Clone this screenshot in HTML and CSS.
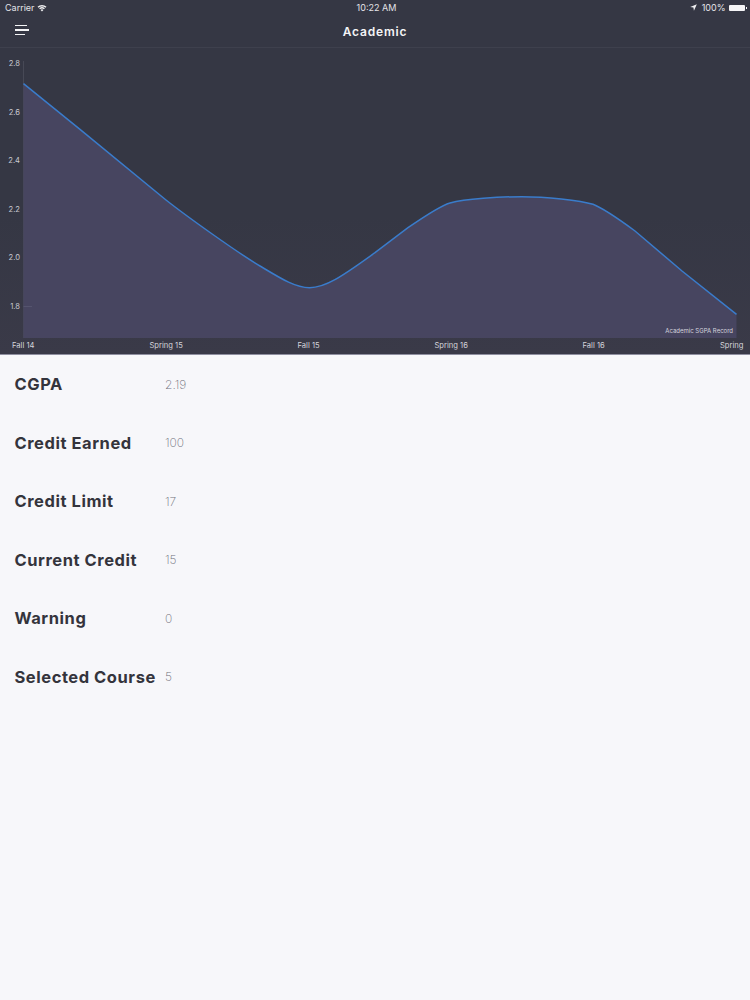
FILE: index.html
```html
<!DOCTYPE html>
<html lang="en">
<head>
<meta charset="utf-8">
<title>Academic</title>
<link rel="stylesheet" href="styles.css">
</head>
<body>
<header class="top">
  <div class="status">
    <div class="status-left">
      <span>Carrier</span>
      <svg class="wifi" viewBox="0 0 12 9"><path d="M6 8.8 4.3 6.9a2.4 2.4 0 0 1 3.4 0zM3.6 6.100 2.600 5a4.900 4.900 0 0 1 6.800 0L8.400 6.100a3.500 3.500 0 0 0-4.800 0zM1.900 4.300.6 3a7.700 7.700 0 0 1 10.800 0L10.100 4.300a5.900 5.900 0 0 0-8.200 0z"/></svg>
    </div>
    <div class="status-time">10:22 AM</div>
    <div class="status-right">
      <svg class="arrow" viewBox="0 0 8 8"><path d="M7.800.2.200 3.500l3.700.6.600 3.700z"/></svg>
      <span>100%</span>
      <span class="battery"><span class="battery-tip"></span></span>
    </div>
  </div>
  <nav class="nav">
    <button class="menu" aria-label="Menu">
      <span class="menu-line l1"></span>
      <span class="menu-line l2"></span>
      <span class="menu-line l3"></span>
    </button>
    <h1 class="title">Academic</h1>
  </nav>
</header>
<section class="chart">
  <svg class="plot" viewBox="0 0 750 307" width="750" height="307">
    <path class="axis" d="M23.500 13V290"/>
    <path class="area" d="M23.500 35.700L80 81.300L166 152C185 167 235 203 260 218C280 230 295 239.700 309.500 239.700C325 239.700 340 230 375 204.700L408 179.700C425 168 440 158 450 155C465 151 500 148.700 522 148.700C545 148.700 580 152 593 156.300C605 161 620 172 635 183L682 223L736.500 266.300V290H23.500Z"/>
    <path class="tick" d="M23.500 258.500H32"/>
    <path class="line" d="M23.500 35.700L80 81.300L166 152C185 167 235 203 260 218C280 230 295 239.700 309.500 239.700C325 239.700 340 230 375 204.700L408 179.700C425 168 440 158 450 155C465 151 500 148.700 522 148.700C545 148.700 580 152 593 156.300C605 161 620 172 635 183L682 223L736.500 266.300"/>
    <g class="ytick">
      <text x="20" y="18.300">2.8</text>
      <text x="20" y="66.800">2.6</text>
      <text x="20" y="115.300">2.4</text>
      <text x="20" y="163.800">2.2</text>
      <text x="20" y="212.300">2.0</text>
      <text x="20" y="260.800">1.8</text>
    </g>
    <g class="xtick">
      <text x="12" y="299.800">Fall 14</text>
      <text x="149.500" y="299.800">Spring 15</text>
      <text x="297.500" y="299.800">Fall 15</text>
      <text x="434.500" y="299.800">Spring 16</text>
      <text x="582.500" y="299.800">Fall 16</text>
      <text x="720" y="299.800">Spring</text>
    </g>
    <text class="caption" x="733" y="285">Academic SGPA Record</text>
  </svg>
</section>
<main class="stats">
  <div class="row"><span class="label">CGPA</span><span class="value">2.19</span></div>
  <div class="row"><span class="label">Credit Earned</span><span class="value">100</span></div>
  <div class="row"><span class="label">Credit Limit</span><span class="value">17</span></div>
  <div class="row"><span class="label">Current Credit</span><span class="value">15</span></div>
  <div class="row"><span class="label">Warning</span><span class="value">0</span></div>
  <div class="row"><span class="label">Selected Course</span><span class="value">5</span></div>
</main>
</body>
</html>
```
FILE: styles.css
```css
html, body {
  margin: 0;
  padding: 0;
  height: 100%;
  overflow: hidden;
  background: #f7f7fa;
  font-family: "Inter", "Liberation Sans", sans-serif;
}
.top {
  background: #353744;
  color: #f2f2f5;
  height: 47px;
  border-bottom: 1px solid #3e404d;
}
.status {
  height: 15px;
  padding: 0 4px 0 5px;
  display: grid;
  grid-template-columns: 1fr auto 1fr;
  align-items: center;
  font-size: 9px;
  color: #e4e4e8;
}
.status-left { display: flex; align-items: center; gap: 2.500px; }
.wifi { width: 10px; height: 8px; fill: #f0f0f2; }
.status-time { padding-left: 2px; }
.status-right {
  display: flex;
  align-items: center;
  justify-content: flex-end;
  gap: 3.500px;
}
.arrow { width: 7px; height: 7px; margin-right: 1px; fill: #f0f0f2; }
.battery {
  position: relative;
  width: 16px;
  height: 6px;
  margin-right: 1px;
  background: #f5f5f7;
  border-radius: 1px;
}
.battery-tip {
  position: absolute;
  right: -2px;
  top: 2px;
  width: 1px;
  height: 2px;
  background: #f5f5f7;
}
.nav {
  position: relative;
  height: 32px;
  display: flex;
  align-items: center;
  justify-content: center;
}
.menu {
  position: absolute;
  left: 15px;
  top: 9.500px;
  width: 15px;
  padding: 0;
  border: 0;
  background: none;
  display: flex;
  flex-direction: column;
  gap: 3px;
}
.menu-line { display: block; height: 1.500px; background: #f4f4f6; }
.l1 { width: 12px; }
.l2 { width: 14px; }
.l3 { width: 10px; }
.title {
  margin: 0;
  font-size: 12px;
  font-weight: 600;
  letter-spacing: 0.800px;
  color: #f4f4f6;
}
.chart {
  height: 307px;
  background: linear-gradient(#353744 55%, #3a3a48);
  border-bottom: 1px solid #8f8fa0;
  box-sizing: border-box;
}
.plot { display: block; }
.axis { stroke: #474956; stroke-width: 1; fill: none; }
.tick { stroke: #55546e; stroke-width: 1; fill: none; }
.area { fill: #474560; }
.line { fill: none; stroke: #3a7ccb; stroke-width: 1.500; }
.ytick text {
  font-size: 7.600px;
  fill: #c8c8d0;
  text-anchor: end;
}
.xtick text {
  font-size: 7.600px;
  fill: #d4d4da;
}
.caption {
  font-size: 6px;
  fill: #d4d4de;
  text-anchor: end;
}
.stats {
  padding-top: 0;
}
.row {
  height: 58.500px;
  display: flex;
  align-items: center;
  padding-left: 14.500px;
}
.label {
  width: 150.500px;
  flex: none;
  font-size: 16.500px;
  font-weight: 700;
  letter-spacing: 0.550px;
  color: #34343c;
  white-space: nowrap;
}
.value {
  font-weight: 200;
  font-size: 12px;
  color: #70707a;
}
```
